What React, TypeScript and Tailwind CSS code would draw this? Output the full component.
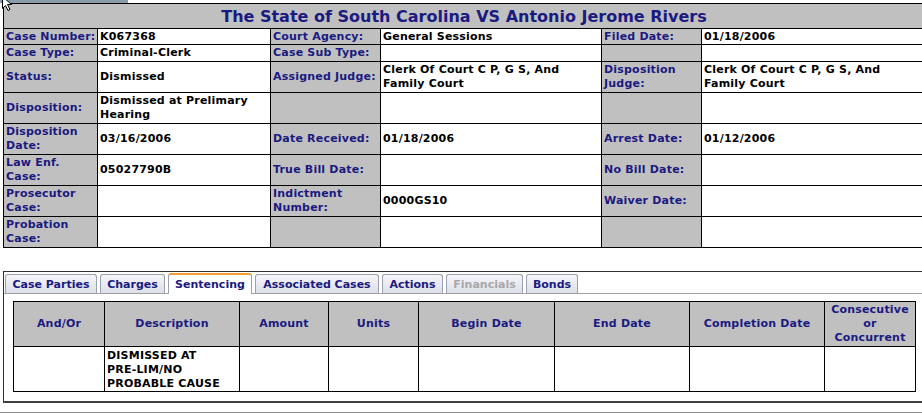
import React from "react";

const L = "bg-[#c0c0c0] text-[#1a1a80] border border-black px-[2px] align-middle whitespace-nowrap overflow-hidden";
const V = "bg-white text-black border border-black px-[2px] align-middle whitespace-nowrap overflow-hidden";

type C = React.ReactNode;

function Row({ h, cells }: { h: string; cells: [C, C, C, C, C, C] }) {
  return (
    <tr className={h}>
      <td className={L}>{cells[0]}</td>
      <td className={V}>{cells[1]}</td>
      <td className={L}>{cells[2]}</td>
      <td className={V}>{cells[3]}</td>
      <td className={L}>{cells[4]}</td>
      <td className={V}>{cells[5]}</td>
    </tr>
  );
}

const tabs: { label: string; w: string; active?: boolean; disabled?: boolean }[] = [
  { label: "Case Parties", w: "w-[92px]" },
  { label: "Charges", w: "w-[65px]" },
  { label: "Sentencing", w: "w-[84px]", active: true },
  { label: "Associated Cases", w: "w-[124px]" },
  { label: "Actions", w: "w-[61px]" },
  { label: "Financials", w: "w-[77px]", disabled: true },
  { label: "Bonds", w: "w-[52px]" },
];

const judge = (
  <>
    Clerk Of Court C P, G S, And
    <br />
    Family Court
  </>
);

export default function App() {
  return (
    <div className="relative w-[922px] h-[413px] overflow-hidden bg-white font-['DejaVu_Sans',sans-serif] text-[11px] font-bold leading-[14px] tracking-[0.2px]">
      <div className="h-[3px] w-[128px] bg-[#8a9aaa]" />
      <table className="border-collapse table-fixed w-[921px] ml-[3px]">
        <colgroup>
          <col className="w-[94px]" />
          <col className="w-[173px]" />
          <col className="w-[110px]" />
          <col className="w-[221px]" />
          <col className="w-[100px]" />
          <col className="w-[223px]" />
        </colgroup>
        <tbody>
          <tr className="h-[25px]">
            <td colSpan={6} className="bg-[#c0c0c0] border border-black text-center text-[16px] leading-[19px] tracking-normal text-[#1a1a80] align-middle pt-px">
              The State of South Carolina VS Antonio Jerome Rivers
            </td>
          </tr>
          <Row h="h-[16px]" cells={["Case Number:", "K067368", "Court Agency:", "General Sessions", "Filed Date:", "01/18/2006"]} />
          <Row h="h-[17px]" cells={["Case Type:", "Criminal-Clerk", "Case Sub Type:", "", "", ""]} />
          <Row h="h-[31px]" cells={["Status:", "Dismissed", "Assigned Judge:", judge, <>Disposition<br />Judge:</>, judge]} />
          <Row h="h-[31px]" cells={["Disposition:", <>Dismissed at Prelimary<br />Hearing</>, "", "", "", ""]} />
          <Row h="h-[31px]" cells={[<>Disposition<br />Date:</>, "03/16/2006", "Date Received:", "01/18/2006", "Arrest Date:", "01/12/2006"]} />
          <Row h="h-[31px]" cells={[<>Law Enf.<br />Case:</>, "05027790B", "True Bill Date:", "", "No Bill Date:", ""]} />
          <Row h="h-[31px]" cells={[<>Prosecutor<br />Case:</>, "", <>Indictment<br />Number:</>, "0000GS10", "Waiver Date:", ""]} />
          <Row h="h-[31px]" cells={[<>Probation<br />Case:</>, "", "", "", "", ""]} />
        </tbody>
      </table>

      <div className="mt-[23px] ml-[3px] w-[925px] border-t border-l border-[#303030] border-b-2 border-b-[#404040]">
        <div className="flex items-end gap-[3px] pl-[1px] h-[22px] border-b border-[#a0a0a0]">
          {tabs.map((t) => (
            <div
              key={t.label}
              className={
                t.active
                  ? `${t.w} h-[21px] -mb-px bg-white border border-b-0 border-[#9aa0b0] border-t-2 border-t-[#f0a030] rounded-t-[3px] text-center text-[#1a1a80] leading-[19px] tracking-normal whitespace-nowrap`
                  : `${t.w} h-[19px] bg-gradient-to-b from-[#f6f6fa] to-[#dcdfe8] border border-b-0 border-[#9aa0b0] rounded-t-[3px] text-center leading-[19px] tracking-normal whitespace-nowrap ${t.disabled ? "text-[#a8a8a8]" : "text-[#1a1a80]"}`
              }
            >
              {t.label}
            </div>
          ))}
        </div>
        <div className="pt-[7px] pb-[9px] pl-[9px]">
          <table className="border-collapse table-fixed w-[902px]">
            <colgroup>
              <col className="w-[91px]" />
              <col className="w-[135px]" />
              <col className="w-[89px]" />
              <col className="w-[90px]" />
              <col className="w-[136px]" />
              <col className="w-[135px]" />
              <col className="w-[135px]" />
              <col className="w-[91px]" />
            </colgroup>
            <tbody>
              <tr className="h-[45px]">
                {["And/Or", "Description", "Amount", "Units", "Begin Date", "End Date", "Completion Date"].map((h) => (
                  <td key={h} className="bg-[#c0c0c0] text-[#1a1a80] border border-black text-center align-middle px-[2px] whitespace-nowrap">
                    {h}
                  </td>
                ))}
                <td className="bg-[#c0c0c0] text-[#1a1a80] border border-black text-center align-middle px-[2px] whitespace-nowrap">
                  Consecutive<br />or<br />Concurrent
                </td>
              </tr>
              <tr className="h-[45px]">
                <td className="border border-black" />
                <td className="border border-black px-[2px] align-middle text-black pt-px whitespace-nowrap">
                  DISMISSED AT<br />PRE-LIM/NO<br />PROBABLE CAUSE
                </td>
                <td className="border border-black" />
                <td className="border border-black" />
                <td className="border border-black" />
                <td className="border border-black" />
                <td className="border border-black" />
                <td className="border border-black" />
              </tr>
            </tbody>
          </table>
        </div>
      </div>
      <div className="mt-[9px] h-px w-full bg-[#909090]" />

      <svg className="absolute left-[1px] top-[-4px]" width="14" height="16" viewBox="0 0 14 16">
        <path d="M1.5 0.5 L1.5 12.5 L4.5 9.5 L7 14.5 L9 13.5 L6.5 8.5 L10.5 8.5 Z" fill="#ffffff" stroke="#000000" strokeWidth="1" />
      </svg>
    </div>
  );
}
